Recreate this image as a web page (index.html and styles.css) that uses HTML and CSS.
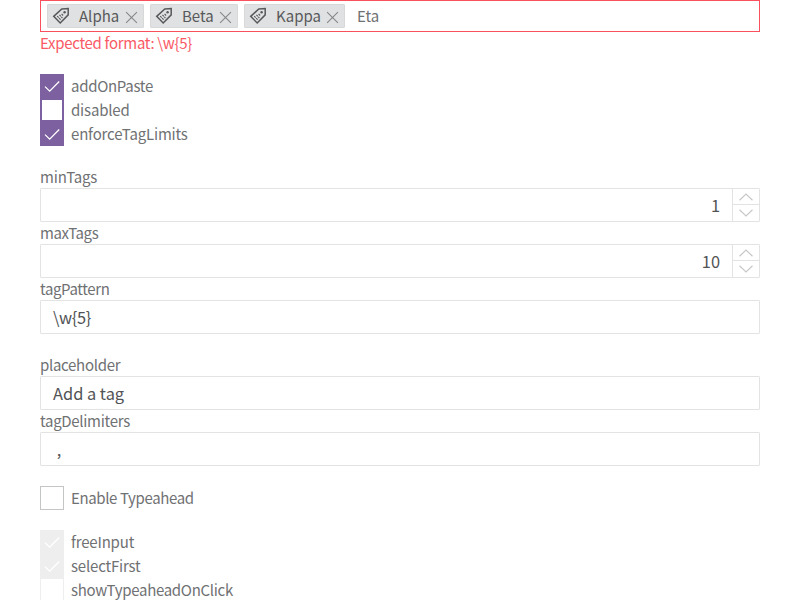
FILE: index.html
```html
<!DOCTYPE html>
<html lang="en">
<head>
<meta charset="utf-8">
<title>Tags input</title>
<link rel="stylesheet" href="styles.css">
</head>
<body>
<svg width="0" height="0" class="defs">
  <symbol id="tag" viewBox="0 0 18 18"><path d="M9.8 2 L16.2 1.5 L16.2 7.9 L8.2 16 L1.7 9.4 Z"/><circle cx="12.6" cy="5.2" r="1.2" class="dot"/><path class="thin" d="M5.2 9.1l3.6 3.8M7.4 7.9l3 3.1M9.6 6.9l1.8 1.9"/></symbol>
  <symbol id="close" viewBox="0 0 12 12"><path d="M1 1l10 10M11 1L1 11"/></symbol>
  <symbol id="check" viewBox="0 0 24 24"><path d="M5 12.6L9.7 17.2L19.2 7.5"/></symbol>
  <symbol id="up" viewBox="0 0 14 8"><path d="M.5 7.3L7 1L13.5 7.3"/></symbol>
  <symbol id="down" viewBox="0 0 14 8"><path d="M.5 .7L7 7L13.5 .7"/></symbol>
</svg>
<main>
  <div class="tags">
    <span class="tag alpha"><svg class="tag-icon"><use href="#tag"/></svg><span class="name">Alpha</span><svg class="close"><use href="#close"/></svg></span>
    <span class="tag beta"><svg class="tag-icon"><use href="#tag"/></svg><span class="name">Beta</span><svg class="close"><use href="#close"/></svg></span>
    <span class="tag kappa"><svg class="tag-icon"><use href="#tag"/></svg><span class="name">Kappa</span><svg class="close"><use href="#close"/></svg></span>
    <span class="typed">Eta</span>
  </div>
  <div class="error tight">Expected format: \w{5}</div>

  <div class="group options">
    <label class="row"><span class="box on"><svg><use href="#check"/></svg></span><span class="tight">addOnPaste</span></label>
    <label class="row"><span class="box focus"></span><span class="snug">disabled</span></label>
    <label class="row"><span class="box on"><svg><use href="#check"/></svg></span><span class="snug">enforceTagLimits</span></label>
  </div>

  <div class="group">
    <div class="label snug">minTags</div>
    <div class="field number"><span class="value">1</span><span class="spin"><span><svg><use href="#up"/></svg></span><span><svg><use href="#down"/></svg></span></span></div>
    <div class="label tighter">maxTags</div>
    <div class="field number"><span class="value">10</span><span class="spin"><span><svg><use href="#up"/></svg></span><span><svg><use href="#down"/></svg></span></span></div>
    <div class="label tighter">tagPattern</div>
    <div class="field"><span class="value tight">\w{5}</span></div>
  </div>

  <div class="group">
    <div class="label tight">placeholder</div>
    <div class="field"><span class="value">Add a tag</span></div>
    <div class="label tight">tagDelimiters</div>
    <div class="field"><span class="value"> ,</span></div>
  </div>

  <div class="group"><label class="row"><span class="box"></span><span class="tighter">Enable Typeahead</span></label></div>

  <div class="group">
    <label class="row"><span class="box off"><svg><use href="#check"/></svg></span><span class="snug">freeInput</span></label>
    <label class="row"><span class="box off"><svg><use href="#check"/></svg></span><span class="snug">selectFirst</span></label>
    <label class="row"><span class="box faint"></span><span class="tight">showTypeaheadOnClick</span></label>
  </div>
</main>
</body>
</html>
```
FILE: styles.css
```css
* { box-sizing: border-box; }
html, body { margin: 0; height: 600px; overflow: hidden; background: #fff; }
body { font: 15px/22px "Noto Sans CJK SC", sans-serif; color: #6f7173; }
main { width: 720px; margin: 0 auto; }
svg { display: block; fill: none; stroke: currentColor; }
.defs { position: absolute; }
.dot { fill: currentColor; stroke: none; }
.thin { stroke-width: 1.1; stroke-dasharray: 2.2 .6; }
.snug { letter-spacing: -.18px; }
.tight { letter-spacing: -.3px; }
.tighter { letter-spacing: -.37px; }

.tags { display: flex; gap: 6px; height: 32px; padding: 3px 6px; border: 1px solid #f9505b; }
.tag { display: flex; align-items: center; height: 24px; padding: 0 5px 0 4px; border: 1px solid #d8d8d9; border-radius: 1px; background: #e0e1e2; color: #58595b; }
.alpha { width: 97px; }
.beta { width: 88px; }
.kappa { width: 101px; }
.tag-icon { width: 18px; height: 18px; margin-right: 9px; stroke-width: 1.5; }
.close { width: 13px; height: 13px; margin-left: auto; color: #858789; transform: translateY(1px); }
.typed { margin-left: 6px; line-height: 24px; }
.error { height: 22px; color: #fa5a66; }

.group { margin-top: 20px; }
.row { display: flex; gap: 7px; height: 24px; line-height: 24px; }
.box { width: 24px; height: 24px; border: 1px solid #c4c6c6; background: #fff; }
.box svg { width: 24px; height: 24px; margin: -1px; color: #fff; stroke-width: 1.3; }
.on { background: #7d609f; border-color: #7d609f; }
.focus { border: 2px solid #7d609f; }
.off { background: #eee; border-color: #eee; }
.faint { border-color: #eee; }

.label { height: 22px; }
.field { display: flex; height: 34px; border: 1px solid #e3e3e3; border-radius: 1px; }
.value { padding: 0 12px; font-size: 16.4px; line-height: 32px; white-space: pre; color: #515355; }
.number .value { flex: 1; text-align: right; }
.spin { display: flex; flex-direction: column; width: 27px; border-left: 1px solid #e3e3e3; color: #c8c8c8; }
.spin span { height: 15px; display: flex; align-items: center; justify-content: center; }
.spin span + span { height: 17px; border-top: 1px solid #e3e3e3; }
.spin svg { width: 14px; height: 8px; stroke-width: 1.2; }
```
